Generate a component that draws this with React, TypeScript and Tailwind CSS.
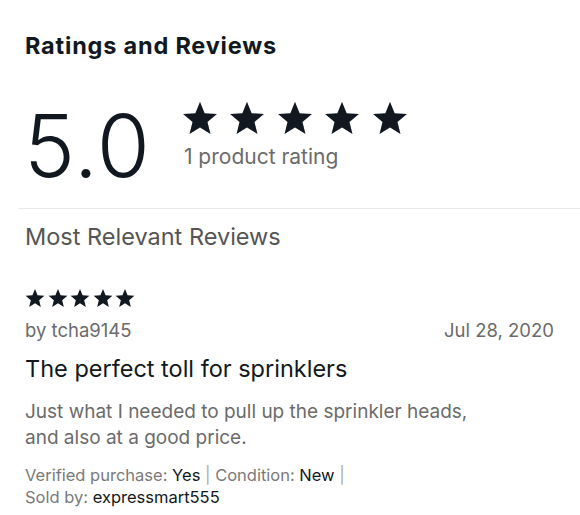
import React from 'react';

const Star: React.FC<{ size: number }> = ({ size }) => (
  <svg width={size} height={size} viewBox="0 0 24 24" className="fill-[#111820]">
    <path d="M12 1.2l3.1 7.6 8.2.6-6.3 5.3 2 8-7-4.4-7 4.4 2-8L.7 9.4l8.2-.6z" />
  </svg>
);

const Stars: React.FC<{ size: number; gap: string }> = ({ size, gap }) => (
  <div className={`flex ${gap}`}>
    {[0, 1, 2, 3, 4].map((i) => (
      <Star key={i} size={size} />
    ))}
  </div>
);

export default function App() {
  return (
    <div className="w-[580px] h-[515px] bg-white overflow-hidden font-['Inter',sans-serif] text-[#111820]">
      <div className="pl-[25px] pr-[26px] pt-[32px]">
        <h2 className="text-[23.5px] leading-[28px] font-bold tracking-[0.8px]">Ratings and Reviews</h2>
        <div className="flex items-start mt-[35px] h-[90px]">
          <div className="text-[86px] leading-[90px] font-light tracking-[1px] mt-[6px] ml-[-1px]">5.0</div>
          <div className="ml-[31px] pt-[5px]">
            <Stars size={36} gap="gap-[11.5px]" />
            <div className="text-[21px] leading-[26px] text-[#6b6b6b] mt-[8px] ml-[2px]">1 product rating</div>
          </div>
        </div>
      </div>
      <div className="ml-[18px] mt-[23px] border-t border-[#e8e8e8]" />
      <div className="pl-[25px] pr-[26px]">
        <div className="text-[23.5px] leading-[28px] text-[#555] mt-[14px]">Most Relevant Reviews</div>
        <div className="mt-[37px]">
          <Stars size={20} gap="gap-[2.5px]" />
        </div>
        <div className="flex justify-between text-[18.5px] leading-[24px] text-[#6b6b6b] mt-[10px]">
          <span>by tcha9145</span>
          <span>Jul 28, 2020</span>
        </div>
        <div className="text-[23.5px] leading-[28px] mt-[13px]">The perfect toll for sprinklers</div>
        <p className="text-[19px] leading-[26px] text-[#6b6b6b] mt-[16px]">
          Just what I needed to pull up the sprinkler heads,
          <br />
          and also at a good price.
        </p>
        <div className="text-[16.5px] leading-[22px] text-[#7a7a7a] mt-[13px]">
          Verified purchase: <span className="text-[#111820]">Yes</span> <span className="text-[#aaa]">|</span> Condition:{' '}
          <span className="text-[#111820]">New</span> <span className="text-[#aaa]">|</span>
          <br />
          Sold by: <span className="text-[#111820]">expressmart555</span>
        </div>
      </div>
    </div>
  );
}
